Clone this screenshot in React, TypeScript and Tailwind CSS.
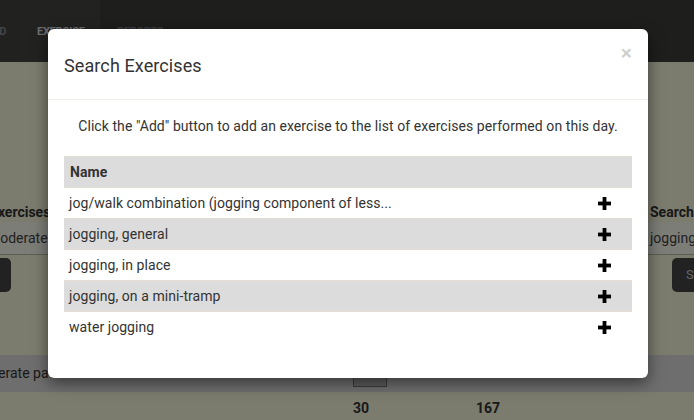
import React from "react";

const rows = [
  "jog/walk combination (jogging component of less...",
  "jogging, general",
  "jogging, in place",
  "jogging, on a mini-tramp",
  "water jogging",
];

function Plus() {
  return (
    <svg width="13" height="13" viewBox="0 0 13 13" className="inline-block">
      <rect x="4.6" y="0" width="3.8" height="13" fill="#000" />
      <rect x="0" y="4.6" width="13" height="3.8" fill="#000" />
    </svg>
  );
}

export default function App() {
  return (
    <div
      className="relative w-[694px] h-[420px] overflow-hidden bg-[#f6f6dc]"
      style={{ fontFamily: "Roboto, 'Liberation Sans', sans-serif" }}
    >
      {/* Background page */}
      <div className="h-[62px] bg-[#3c3c3a] flex items-start text-[11px] font-bold uppercase tracking-tight">
        <div className="w-[20px] h-full bg-[#424240] flex items-center justify-end pr-[14px] text-[#8a8a8a] pt-[2px] overflow-hidden">
          D
        </div>
        <div className="w-[80px] h-full bg-[#454543] flex items-center pl-[17px] text-[#d8d8e0] pt-[2px]">
          Exercise
        </div>
        <div className="h-full flex items-center pl-[17px] text-[#7a7a7a] pt-[2px]">
          Reports
        </div>
      </div>

      <div className="flex justify-between mt-[141px]">
        <div className="w-[340px] -ml-[10px] flex flex-col">
          <div className="h-[18px] text-[14px] font-bold text-[#333] leading-[18px] whitespace-nowrap">
            Exercises:
          </div>
          <div className="mt-[1px] h-[33px] bg-[#fafaf0] border-b border-[#bdbdb0] flex items-center text-[14px] text-[#444] -ml-[2px]">
            Moderate
          </div>
          <div className="mt-[3px] h-[34px] w-[80px] -ml-[59px] rounded-[5px] bg-[#444]" />
        </div>
        <div className="w-[46px] overflow-hidden flex flex-col">
          <div className="h-[18px] text-[14px] font-bold text-[#333] leading-[18px] whitespace-nowrap pl-[2px]">
            Search Exercises
          </div>
          <div className="mt-[1px] h-[33px] w-[300px] bg-[#fafaf0] border-b border-[#bdbdb0] flex items-center pl-[2px] text-[14px] text-[#444] whitespace-nowrap">
            jogging
          </div>
          <div className="mt-[3px] h-[34px] w-[80px] ml-[24px] rounded-[5px] bg-[#444] flex items-center pl-[14px] text-[13px] text-[#ccc]">
            Search
          </div>
        </div>
      </div>

      <div className="mt-[63px] h-[37px] bg-[#dcdcdc] flex items-center text-[14px] text-[#333] relative">
        <div className="-ml-[30px] whitespace-nowrap">Moderate pace</div>
        <div className="absolute left-[353px] top-[-4px] w-[34px] h-[36px] border border-[#777] bg-[#bbb]" />
      </div>
      <div className="h-[32px] flex items-center text-[14px] font-bold text-[#333]">
        <div className="ml-[353px] w-[123px]">30</div>
        <div>167</div>
      </div>

      {/* Backdrop */}
      <div className="absolute inset-0 bg-black/50" />

      {/* Modal */}
      <div className="absolute left-[48px] top-[29px] w-[600px] h-[349px] bg-white rounded-[6px] shadow-[0_5px_15px_rgba(0,0,0,0.5)] text-[#333]">
        <div className="relative pt-[24px] pb-[20px] px-[16px] border-b border-[#f2ede6]">
          <div className="text-[18px] leading-[26px] tracking-[0.1px]">Search Exercises</div>
          <div className="absolute right-[16px] top-[14px] text-[21px] font-bold leading-[21px] text-black/20">
            ×
          </div>
        </div>
        <div className="px-[16px] pt-[16px]">
          <div className="text-[14px] leading-[20px] text-center tracking-[0.07px]">
            Click the "Add" button to add an exercise to the list of exercises performed on this day.
          </div>
          <div className="mt-[20px] text-[14px] tracking-[0.06px]">
            <div className="h-[31px] bg-[#dcdcdc] border-t border-[#e4ddd2] flex items-center pl-[6px] font-bold text-[#333]">
              Name
            </div>
            {rows.map((r, i) => (
              <div
                key={r}
                className={
                  "h-[31px] border-t border-[#e4ddd2] flex items-center " +
                  (i % 2 === 1 ? "bg-[#dcdcdc]" : "bg-white")
                }
              >
                <div className="flex-1 pl-[5px] text-[#333]">{r}</div>
                <div className="w-[56px] flex justify-center">
                  <Plus />
                </div>
              </div>
            ))}
          </div>
        </div>
      </div>
    </div>
  );
}
